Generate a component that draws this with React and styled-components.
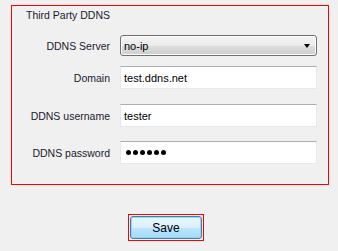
import styled, { createGlobalStyle } from "styled-components";

const GlobalStyle = createGlobalStyle`
  body {
    margin: 0;
    background: #f0f0f0;
    font-family: "Liberation Sans", Arial, sans-serif;
    font-size: 10.5px;
    color: #000;
  }
`;

const Page = styled.div`
  width: 338px;
  height: 251px;
  display: flex;
  flex-direction: column;
  padding-top: 5px;
  box-sizing: border-box;
`;

const Frame = styled.div`
  margin-left: 11px;
  width: 318px;
  height: 180px;
  box-sizing: border-box;
  border: 1px solid #ff0000;
  padding: 3px 10px 0 0;
`;

const Title = styled.div`
  margin-left: 14px;
  line-height: 13px;
  color: #1a1a2e;
`;

const Form = styled.div`
  display: grid;
  grid-template-columns: 98px 197px;
  column-gap: 10px;
  align-items: center;
  margin-top: 13px;
`;

const Label = styled.div`
  text-align: right;
  color: #1a1a2e;
  margin-top: ${(p) => p.$top || 0}px;
`;

const Select = styled.div`
  height: 21px;
  box-sizing: border-box;
  border: 1px solid #707070;
  border-radius: 3px;
  background: linear-gradient(#f3f3f3 0%, #ebebeb 50%, #dddddd 51%, #cfcfcf 100%);
  box-shadow: inset 0 0 0 1px #fcfcfc;
  display: flex;
  align-items: center;
  justify-content: space-between;
  padding: 0 6px 0 3px;
  font-size: 11px;
`;

const Arrow = styled.div`
  width: 0;
  height: 0;
  border-left: 3.5px solid transparent;
  border-right: 3.5px solid transparent;
  border-top: 4px solid #000;
`;

const Input = styled.div`
  height: 23px;
  box-sizing: border-box;
  border: 1px solid #e3e9ef;
  border-top-color: #abadb3;
  background: #fff;
  display: flex;
  align-items: center;
  padding-left: 3px;
  font-size: 11px;
  margin-top: ${(p) => p.$top || 0}px;
`;

const Dots = styled.div`
  display: flex;
  gap: 2px;
  padding-left: 2px;
`;

const Dot = styled.span`
  width: 5px;
  height: 5px;
  border-radius: 50%;
  background: #000;
`;

const Footer = styled.div`
  margin-top: 29px;
  margin-left: 128px;
  width: 76px;
  height: 27px;
  box-sizing: border-box;
  border: 1px solid #ff0000;
  padding: 1px;
`;

const Button = styled.div`
  height: 100%;
  box-sizing: border-box;
  border: 1px solid #3c7fb1;
  border-radius: 3px;
  background: linear-gradient(#eaf6fd 0%, #d9f0fc 50%, #bee6fd 51%, #a7d9f5 100%);
  box-shadow: inset 0 0 0 1px #7ee0fb;
  display: flex;
  align-items: center;
  justify-content: center;
  font-size: 12px;
`;

export default function App() {
  return (
    <>
      <GlobalStyle />
      <Page>
        <Frame>
          <Title>Third Party DDNS</Title>
          <Form>
            <Label>DDNS Server</Label>
            <Select>
              <span>no-ip</span>
              <Arrow />
            </Select>
            <Label $top={10}>Domain</Label>
            <Input $top={10}>test.ddns.net</Input>
            <Label $top={15}>DDNS username</Label>
            <Input $top={15}>tester</Input>
            <Label $top={14}>DDNS password</Label>
            <Input $top={14}>
              <Dots>
                {[0, 1, 2, 3, 4, 5].map((i) => (
                  <Dot key={i} />
                ))}
              </Dots>
            </Input>
          </Form>
        </Frame>
        <Footer>
          <Button>Save</Button>
        </Footer>
      </Page>
    </>
  );
}
